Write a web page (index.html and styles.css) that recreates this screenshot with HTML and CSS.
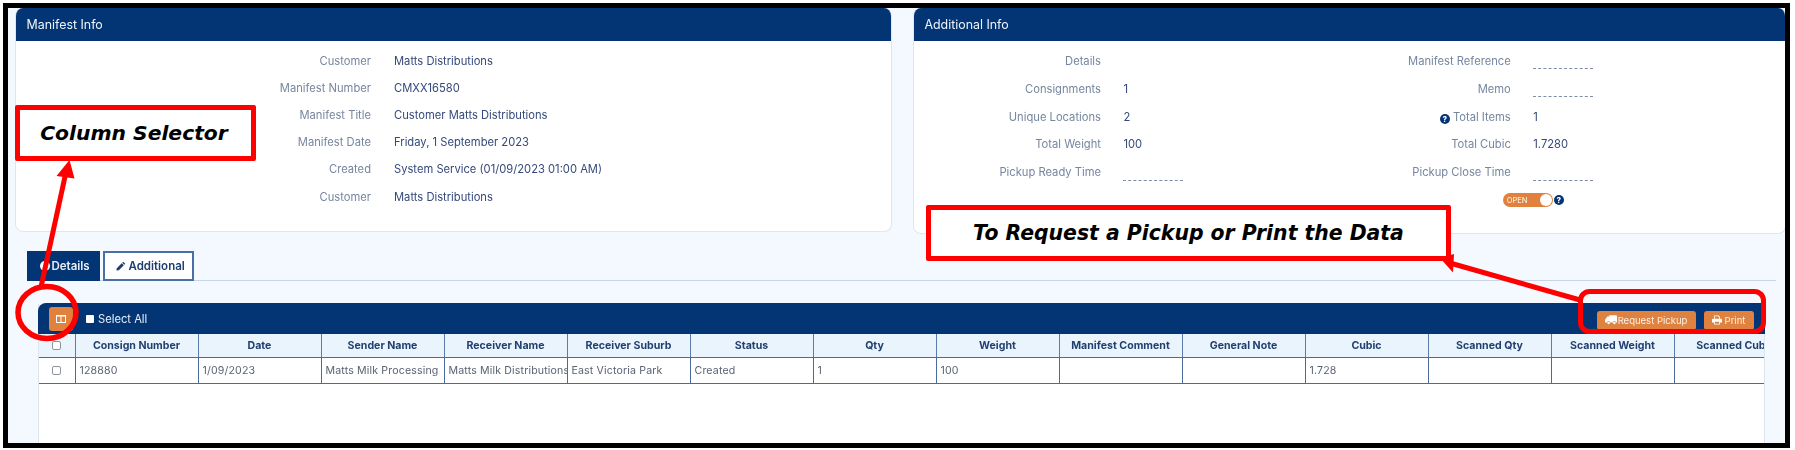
FILE: index.html
```html
<!DOCTYPE html>
<html lang="en">
<head>
<meta charset="utf-8">
<title>Manifest</title>
<link rel="stylesheet" href="styles.css">
</head>
<body>
<div class="frame">
  <div class="cards">
    <section class="card card-main">
      <h2 class="card-title">Manifest Info</h2>
      <div class="info info-main">
        <span class="lbl">Customer</span><span class="val">Matts Distributions</span>
        <span class="lbl">Manifest Number</span><span class="val">CMXX16580</span>
        <span class="lbl">Manifest Title</span><span class="val">Customer Matts Distributions</span>
        <span class="lbl">Manifest Date</span><span class="val">Friday, 1 September 2023</span>
        <span class="lbl">Created</span><span class="val">System Service (01/09/2023 01:00 AM)</span>
        <span class="lbl">Customer</span><span class="val">Matts Distributions</span>
      </div>
    </section>
    <section class="card card-add">
      <h2 class="card-title">Additional Info</h2>
      <div class="info info-add">
        <span class="lbl">Details</span><span class="val"></span>
        <span class="lbl">Manifest Reference</span><span class="val"><span class="empty"></span></span>
        <span class="lbl">Consignments</span><span class="val">1</span>
        <span class="lbl">Memo</span><span class="val"><span class="empty"></span></span>
        <span class="lbl">Unique Locations</span><span class="val">2</span>
        <span class="lbl"><span class="help">?</span> Total Items</span><span class="val">1</span>
        <span class="lbl">Total Weight</span><span class="val">100</span>
        <span class="lbl">Total Cubic</span><span class="val">1.7280</span>
        <span class="lbl">Pickup Ready Time</span><span class="val"><span class="empty"></span></span>
        <span class="lbl">Pickup Close Time</span><span class="val"><span class="empty"></span></span>
        <span class="toggle-row">
          <span class="toggle"><span class="toggle-text">OPEN</span><span class="knob"></span></span>
          <span class="help">?</span>
        </span>
      </div>
    </section>
  </div>

  <nav class="tabs">
    <a class="tab tab-active"><span class="dot"></span>Details</a>
    <a class="tab">
      <svg class="ico-pencil" viewBox="0 0 12 12"><path d="M8.6.9 11.1 3.400 10 4.500 7.500 2zM6.900 2.600 9.400 5.100 3.400 11.100.5 11.500.9 8.600z"/></svg>Additional
    </a>
  </nav>

  <div class="panel">
    <div class="toolbar">
      <button class="col-btn" aria-label="Columns">
        <svg class="ico-cols" viewBox="0 0 10 8"><path d="M0 0h10v8H0zM1 1.500v5.500h3.500V1.500zM5.500 1.500v5.500H9V1.500z" fill-rule="evenodd"/></svg>
      </button>
      <label class="select-all"><span class="white-box"></span>Select All</label>
      <div class="actions">
        <button class="act act-pick">
          <svg class="ico-truck" viewBox="0 0 14 11"><path d="M5 0h8a1 1 0 0 1 1 1v7.500h-1.200a1.800 1.800 0 0 0-3.600 0H6a1.800 1.800 0 0 0-3.600 0H1a1 1 0 0 1-1-1V5.300L2.800 1.500H5z"/><circle cx="4.200" cy="9" r="1.400"/><circle cx="11" cy="9" r="1.400"/></svg>Request Pickup
        </button>
        <button class="act act-print">
          <svg class="ico-print" viewBox="0 0 12 11"><path fill-rule="evenodd" d="M2.500 0h5.500l1.500 1.500V4H11a1 1 0 0 1 1 1v3.500H9.500V11h-7V8.500H0V5a1 1 0 0 1 1-1h1.500zM3.500 1v3h5V2H7.500V1zM3.500 7.500V10h5V7.500z"/></svg>Print
        </button>
      </div>
    </div>
    <div class="table-clip">
      <table class="grid">
        <colgroup>
          <col class="c-check">
          <col class="c"><col class="c"><col class="c"><col class="c"><col class="c"><col class="c"><col class="c">
          <col class="c"><col class="c"><col class="c"><col class="c"><col class="c"><col class="c"><col class="c">
        </colgroup>
        <thead>
          <tr>
            <th><input class="chk" type="checkbox"></th>
            <th>Consign Number</th><th>Date</th><th>Sender Name</th><th>Receiver Name</th><th>Receiver Suburb</th>
            <th>Status</th><th>Qty</th><th>Weight</th><th>Manifest Comment</th><th>General Note</th>
            <th>Cubic</th><th>Scanned Qty</th><th>Scanned Weight</th><th>Scanned Cubic</th>
          </tr>
        </thead>
        <tbody>
          <tr>
            <td class="td-check"><input class="chk" type="checkbox"></td>
            <td>128880</td><td>1/09/2023</td><td>Matts Milk Processing</td><td>Matts Milk Distributions</td><td>East Victoria Park</td>
            <td>Created</td><td>1</td><td>100</td><td></td><td></td>
            <td>1.728</td><td></td><td></td><td></td>
          </tr>
        </tbody>
      </table>
    </div>
  </div>
</div>

<svg class="marks" viewBox="0 0 1795 450">
  <ellipse class="mark-line mark-ring" cx="47" cy="312.500" rx="29" ry="26"/>
  <line class="mark-line" x1="41" y1="287" x2="66" y2="172"/>
  <polygon class="mark-fill" points="69.500,160 56.500,176 74.500,178.500"/>
  <rect class="mark-line" x="1580.500" y="291.500" width="183" height="40" rx="9"/>
  <line class="mark-line" x1="1580" y1="300" x2="1450" y2="263"/>
  <polygon class="mark-fill" points="1440,258 1454,254 1453,272.500"/>
</svg>
<div class="callout callout-cols">Column Selector</div>
<div class="callout callout-pick">To Request a Pickup or Print the Data</div>
</body>
</html>
```
FILE: styles.css
```css
* { box-sizing: border-box; }
html, body { margin: 0; padding: 0; background: #fff; }
body {
  width: 1795px;
  height: 450px;
  overflow: hidden;
  padding: 3px 5px 2px 3px;
  font-family: Inter, "Liberation Sans", sans-serif;
  position: relative;
}
.frame {
  height: 445px;
  border: 5px solid #000;
  background: #f4f9ff;
  overflow: hidden;
  display: flex;
  flex-direction: column;
}
.cards {
  display: flex;
  align-items: flex-start;
  gap: 20.700px;
  padding: 0 4px 0 7px;
  flex: none;
  filter: blur(.3px);
}
.card {
  background: #fff;
  border: 1px solid #dfe6ee;
  border-top: 0;
  border-radius: 8px;
  overflow: hidden;
}
.card-main { width: 877.300px; height: 224px; flex: none; }
.card-add { width: 873px; height: 226px; flex: none; }
.card-title {
  margin: 0;
  height: 33px;
  padding: 0 10.500px;
  display: flex;
  align-items: center;
  background: #033575;
  color: #f0f4fa;
  font-size: 12.400px;
  font-weight: 400;
}
.info {
  display: grid;
  align-items: center;
  font-size: 11.200px;
  padding-top: 6px;
}
.info-main {
  grid-template-columns: 355px 1fr;
  grid-auto-rows: 27.200px;
  column-gap: 23px;
}
.info-add {
  grid-template-columns: 187px 165.300px 199.500px 1fr;
  grid-auto-rows: 27.850px;
  column-gap: 22.500px;
}
.lbl { text-align: right; color: #76869f; }
.val { color: #35497a; }
.empty {
  display: block;
  width: 60px;
  height: 17px;
  border-bottom: 1px dashed #7f8ca3;
}
.help {
  display: inline-flex;
  align-items: center;
  justify-content: center;
  width: 10px;
  height: 10px;
  border-radius: 50%;
  background: #033575;
  color: #fff;
  font-size: 8px;
  font-weight: 800;
  line-height: 1;
  vertical-align: -1px;
}
.toggle-row {
  grid-column: 3 / 5;
  display: flex;
  align-items: center;
  gap: 1px;
  margin-left: 191.500px;
}
.toggle {
  width: 50px;
  height: 14px;
  border-radius: 7px;
  background: #e0823d;
  display: flex;
  align-items: center;
  justify-content: space-between;
  padding: 0 1px 0 4px;
}
.toggle-text { color: #fbe9d9; font-size: 7.500px; font-weight: 500; }
.knob { width: 12px; height: 12px; border-radius: 50%; background: #fff; }
.tabs {
  flex: none;
  display: flex;
  gap: 3px;
  margin: 16.500px 9px 0 19px;
  height: 30.500px;
  border-bottom: 1px solid #c6d6e8;
  filter: blur(.3px);
}
.tab {
  height: 30.500px;
  display: flex;
  align-items: center;
  font-size: 11.500px;
  font-weight: 600;
  color: #1f3d6e;
  background: #fff;
  border: 2px solid #4a6fa5;
  padding-left: 10.500px;
  width: 91px;
}
.tab-active {
  width: 73px;
  background: #033575;
  border-color: #033575;
  color: #e9eff7;
  padding-left: 10.500px;
}
.dot { width: 10px; height: 10px; border-radius: 50%; background: #fff; margin-right: 2px; flex: none; }
.ico-pencil { width: 10px; height: 10px; fill: #1f3d6e; margin-right: 3px; }
.panel {
  flex: 1;
  margin: 22px 20px 0 30px;
  background: #fff;
  border-left: 1px solid #dde5ee;
  border-right: 1px solid #dde5ee;
  min-height: 0;
  filter: blur(.3px);
}
.toolbar {
  height: 31px;
  margin: 0 -1px;
  background: #033575;
  border-radius: 8px 0 0 0;
  display: flex;
  align-items: center;
  padding: 0 11.500px 0 11px;
}
.col-btn {
  width: 24px;
  height: 24px;
  border: 0;
  border-radius: 3px;
  background: #e0823d;
  display: flex;
  align-items: center;
  justify-content: center;
  padding: 0;
}
.ico-cols { width: 10px; height: 8px; fill: #fff; }
.select-all {
  display: flex;
  align-items: center;
  margin-left: 13px;
  color: #e8eef7;
  font-size: 11.200px;
}
.white-box { width: 8px; height: 8px; border-radius: 1px; background: #fff; margin-right: 4px; }
.actions { margin-left: auto; display: flex; gap: 8px; margin-top: 3px; }
.act {
  height: 19px;
  border: 0;
  border-radius: 3px;
  background: #df8240;
  color: #fdf1e6;
  font-family: inherit;
  font-size: 9.500px;
  white-space: nowrap;
  display: flex;
  align-items: center;
  justify-content: center;
  padding: 0;
}
.act-pick { width: 99px; }
.act-print { width: 50px; }
.ico-truck { width: 12px; height: 10px; fill: #fff; margin-right: 1px; flex: none; }
.ico-print { width: 10px; height: 10px; fill: #fff; margin-right: 3px; flex: none; }
.table-clip { overflow: hidden; }
.grid {
  table-layout: fixed;
  border-collapse: collapse;
  width: 1758px;
  font-size: 10.600px;
}
.c-check { width: 36px; }
.c { width: 123px; }
.grid th {
  height: 23px;
  padding: 0;
  background: #e9f4fd;
  color: #233f70;
  font-weight: 700;
  border-right: 1px solid #5d7ba8;
  border-bottom: 1px solid #4a6b9c;
  white-space: nowrap;
  overflow: hidden;
}
.grid td {
  height: 26px;
  padding: 0 0 0 4px;
  color: #5a6272;
  border-right: 1px solid #4a6b9c;
  border-bottom: 1px solid #4a6b9c;
  white-space: nowrap;
  overflow: hidden;
  letter-spacing: .15px;
}
.grid td.td-check { padding: 0; text-align: center; }
.grid th:first-child { text-align: center; }
.chk {
  appearance: none;
  display: block;
  margin: 0 auto;
  width: 9px;
  height: 9px;
  border: 1px solid #8f949b;
  border-radius: 2px;
  background: #fff;
}
.marks {
  position: absolute;
  left: 0;
  top: 0;
  width: 1795px;
  height: 450px;
  pointer-events: none;
}
.mark-line { fill: none; stroke: #f00; stroke-width: 5; }
.mark-ring { stroke-width: 5.500; }
.mark-fill { fill: #f00; }
.callout {
  position: absolute;
  background: #fff;
  border: 5px solid #f00;
  border-radius: 2px;
  display: flex;
  align-items: center;
  justify-content: center;
  color: #000;
  font-family: "DejaVu Sans", sans-serif;
  font-weight: 700;
  font-style: italic;
  white-space: nowrap;
}
.callout-cols { left: 14.500px; top: 105px; width: 241px; height: 56px; font-size: 20.300px; padding-right: 2px; }
.callout-pick { left: 926px; top: 205px; width: 525px; height: 56px; font-size: 20.400px; }
```
